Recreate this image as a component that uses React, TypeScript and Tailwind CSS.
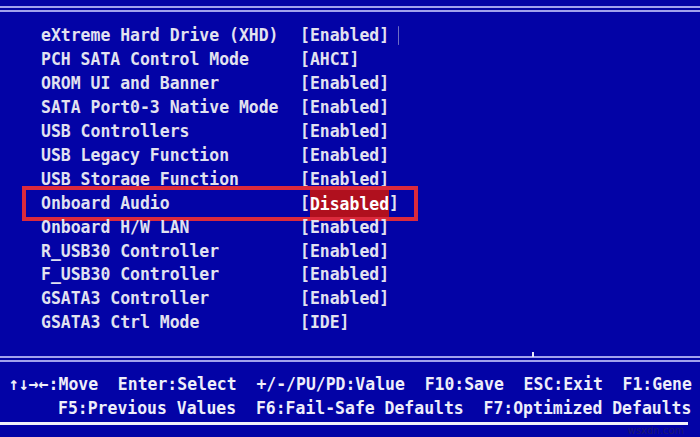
const settings: [string, string][] = [
  ["eXtreme Hard Drive (XHD)", "[Enabled]"],
  ["PCH SATA Control Mode", "[AHCI]"],
  ["OROM UI and Banner", "[Enabled]"],
  ["SATA Port0-3 Native Mode", "[Enabled]"],
  ["USB Controllers", "[Enabled]"],
  ["USB Legacy Function", "[Enabled]"],
  ["USB Storage Function", "[Enabled]"],
  ["Onboard Audio", "[Disabled]"],
  ["Onboard H/W LAN", "[Enabled]"],
  ["R_USB30 Controller", "[Enabled]"],
  ["F_USB30 Controller", "[Enabled]"],
  ["GSATA3 Controller", "[Enabled]"],
  ["GSATA3 Ctrl Mode", "[IDE]"],
]

function SettingRow({ label, value, index }: { label: string; value: string; index: number }) {
  const selected = value === "[Disabled]"
  return (
    <div className="relative h-6">
      <div className="flex h-6 items-center scale-y-110">
        <span className="w-[300px] pl-[41px] whitespace-pre">{label}</span>
        {selected ? (
          <span className="flex items-center whitespace-pre">
            [<span className="bg-[#b0101e] text-white h-[25px] leading-[25px]">Disabled</span>]
          </span>
        ) : (
          <span className="whitespace-pre">{value}</span>
        )}
        {index === 0 && <span className="ml-[9px] w-px h-[17px] bg-[#6e6ec4]" />}
      </div>
      {/* annotation box */}
      {selected && (
        <div className="absolute left-[22px] -top-[5px] w-[396px] h-[35px] border-4 border-[#dc2a3c]" />
      )}
    </div>
  )
}

export default function App() {
  return (
    <div className="w-[700px] h-[437px] overflow-hidden bg-[#0303a6] text-[#e2e2f0] font-['DejaVu_Sans_Mono','Liberation_Mono',monospace] font-bold text-[16.45px]">
      <div className="pt-[6px]">
        <div className="h-[6px] border-y-2 border-[#a2a2ee]" />
      </div>

      <div className="pt-[11px]">
        {settings.map(([label, value], i) => (
          <SettingRow key={label} label={label} value={value} index={i} />
        ))}
      </div>

      <div className="relative mt-[21px]">
        <div className="h-[6px] border-y-2 border-[#a2a2ee]" />
        <div className="absolute left-[532px] -top-[4px] w-[2px] h-[5px] bg-[#e8e8f8]" />
      </div>

      <div className="pt-[11px] text-[#eeeefa]">
        <div className="flex h-6 items-center pl-[9px] whitespace-pre scale-y-110">
          {"↑↓→←:Move  Enter:Select  +/-/PU/PD:Value  F10:Save  ESC:Exit  F1:Gene"}
        </div>
        <div className="flex h-6 items-center pl-[58px] whitespace-pre scale-y-110">
          {"F5:Previous Values  F6:Fail-Safe Defaults  F7:Optimized Defaults"}
        </div>
      </div>

      <div className="mt-px h-[3px] w-[688px] bg-[#f2f2fa]" />
      <div className="flex justify-end pr-[16px]">
        <span className="font-['DejaVu_Sans',sans-serif] font-normal text-[10px] leading-[12px] text-[#1a1a70]">
          wsxdn.com
        </span>
      </div>
    </div>
  )
}
